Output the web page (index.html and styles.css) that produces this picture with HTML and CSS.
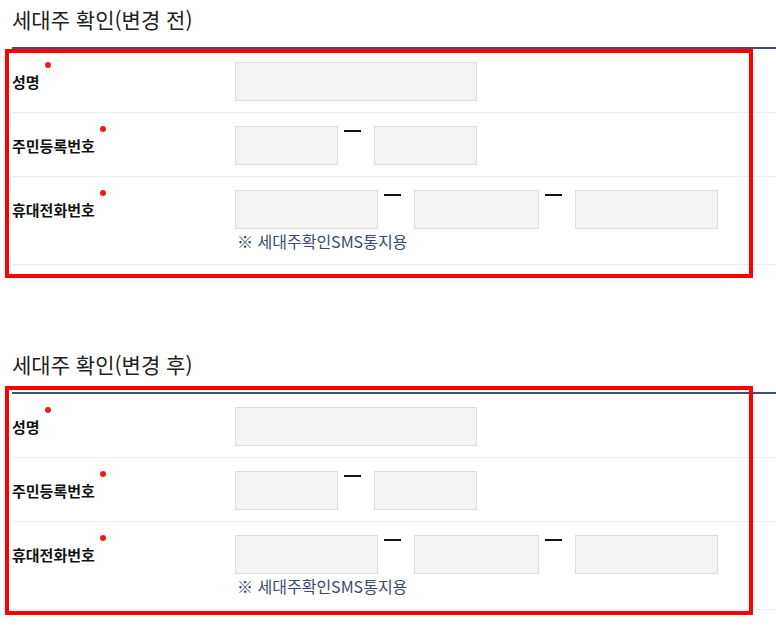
FILE: index.html
```html
<!DOCTYPE html>
<html lang="ko">
<head>
<meta charset="utf-8">
<title>세대주 확인</title>
<link rel="stylesheet" href="styles.css">
</head>
<body>
<section class="sec sec-first">
  <h2 class="title">세대주 확인(변경 전)</h2>
  <div class="table">
    <div class="row">
      <div class="th"><span class="label req">성명</span></div>
      <div class="td"><div class="fields"><span class="inp w242"></span></div></div>
    </div>
    <div class="row">
      <div class="th"><span class="label req">주민등록번호</span></div>
      <div class="td"><div class="fields"><span class="inp w103"></span><span class="dash"></span><span class="inp w103"></span></div></div>
    </div>
    <div class="row">
      <div class="th"><span class="label req">휴대전화번호</span></div>
      <div class="td">
        <div class="fields"><span class="inp w143"></span><span class="dash"></span><span class="inp w125"></span><span class="dash"></span><span class="inp w143"></span></div>
        <p class="note"><span class="note-mark">※</span> 세대주확인SMS통지용</p>
      </div>
    </div>
    <div class="mark mark-first"></div>
  </div>
</section>

<section class="sec sec-second">
  <h2 class="title">세대주 확인(변경 후)</h2>
  <div class="table">
    <div class="row">
      <div class="th"><span class="label req">성명</span></div>
      <div class="td"><div class="fields"><span class="inp w242"></span></div></div>
    </div>
    <div class="row">
      <div class="th"><span class="label req">주민등록번호</span></div>
      <div class="td"><div class="fields"><span class="inp w103"></span><span class="dash"></span><span class="inp w103"></span></div></div>
    </div>
    <div class="row">
      <div class="th"><span class="label req">휴대전화번호</span></div>
      <div class="td">
        <div class="fields"><span class="inp w143"></span><span class="dash"></span><span class="inp w125"></span><span class="dash"></span><span class="inp w143"></span></div>
        <p class="note"><span class="note-mark">※</span> 세대주확인SMS통지용</p>
      </div>
    </div>
    <div class="mark mark-second"></div>
  </div>
</section>
</body>
</html>
```

FILE: styles.css
```css
html, body {
  margin: 0;
  padding: 0;
  background: #fff;
}
html {
  overflow: hidden;
}
body {
  font-family: "Noto Sans CJK KR", "Noto Sans", sans-serif;
  color: #222;
  width: 776px;
  height: 631px;
}
.sec {
  padding-left: 12px;
}
.sec-first {
  padding-top: 5px;
}
.sec-second {
  margin-top: 85px;
}
.title {
  margin: 0 0 14px 0;
  font-size: 21px;
  line-height: 28px;
  height: 28px;
  font-weight: normal;
  color: #222;
  white-space: nowrap;
}
.table {
  position: relative;
  border-top: 2px solid #3e5279;
  width: 764px;
}
.row {
  display: flex;
  align-items: flex-start;
  padding: 13px 0 11px 0;
  border-bottom: 1px solid #eeeeee;
}
.th {
  width: 223px;
  flex: none;
}
.label {
  position: relative;
  display: inline-block;
  font-size: 15px;
  line-height: 39px;
  height: 39px;
  font-weight: bold;
  color: #111;
}
.req::after {
  content: "";
  position: absolute;
  left: calc(100% + 5px);
  top: 0;
  width: 6px;
  height: 6px;
  border-radius: 50%;
  background: #f01c1c;
}
.td {
  flex: 1;
}
.fields {
  display: flex;
  align-items: flex-start;
  height: 39px;
}
.inp {
  display: block;
  height: 37px;
  border: 1px solid #dddddd;
  background: #f4f4f4;
  box-sizing: content-box;
}
.w242 { width: 240px; }
.w103 { width: 101px; }
.w143 { width: 141px; }
.w125 { width: 123px; }
.dash {
  display: block;
  width: 17px;
  height: 2px;
  background: #111;
  margin: 4px 13px 0 6px;
}
.note {
  margin: 0;
  padding-left: 2px;
  font-size: 16px;
  line-height: 24px;
  height: 24px;
  color: #3b4a6c;
  white-space: nowrap;
}
.note-mark {
  font-weight: bold;
  color: #34426a;
}
.mark {
  position: absolute;
  left: -7px;
  width: 740px;
  border: 4px solid #ff0000;
  pointer-events: none;
}
.mark-first {
  top: 0;
  bottom: -13px;
}
.mark-second {
  top: -8px;
  bottom: -5px;
}
```
